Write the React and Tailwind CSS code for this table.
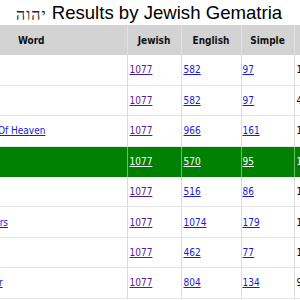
const ROWS = [
  { word: 'Amen', jewish: 1077, english: 582, simple: 97, next: '1' },
  { word: 'Jesus', jewish: 1077, english: 582, simple: 97, next: '4' },
  { word: 'The Window Of Heaven', jewish: 1077, english: 966, simple: 161, next: '1', link: true },
  { word: 'Holy One', jewish: 1077, english: 570, simple: 95, next: '1', active: true },
  { word: 'Mighty', jewish: 1077, english: 516, simple: 86, next: '1' },
  { word: 'Three Teachers', jewish: 1077, english: 1074, simple: 179, next: '1', link: true },
  { word: 'Salvation', jewish: 1077, english: 462, simple: 77, next: '1' },
  { word: 'Great Teacher', jewish: 1077, english: 804, simple: 134, next: '9', link: true },
]

const body = { fontFamily: '"DejaVu Sans Condensed", "DejaVu Sans", Verdana, sans-serif' }

export default function App() {
  return (
    <div className="w-[300px] h-[300px] overflow-hidden bg-white">
      <div className="h-[25px] flex items-start pl-[16px]">
        <span className="mt-[7px] text-[16px] tracking-[1px] leading-none text-[#222]" style={{ fontFamily: '"Liberation Serif", "DejaVu Serif", serif' }}>יהוה</span>
        <span className="ml-[5px] mt-[2px] text-[18.6px] leading-[22px] text-black" style={{ fontFamily: '"Liberation Sans", Arial, sans-serif' }}>
          Results by Jewish Gematria
        </span>
      </div>

      <table className="ml-[-64px] w-[418px] table-fixed border-collapse text-[10px]" style={body}>
        <colgroup>
          <col className="w-[191px]" />
          <col className="w-[54px]" />
          <col className="w-[60px]" />
          <col className="w-[53px]" />
          <col className="w-[60px]" />
        </colgroup>
        <thead>
          <tr className="h-[30px] bg-[#d3d3d3] text-[#111]">
            <th className="font-bold text-center border-r border-[#e0e0e0]">Word</th>
            <th className="font-bold text-center border-r border-[#e0e0e0]">Jewish</th>
            <th className="font-bold text-center border-r border-[#e0e0e0]">English</th>
            <th className="font-bold text-center border-r border-[#e0e0e0]">Simple</th>
            <th className="font-bold text-center">Search</th>
          </tr>
        </thead>
        <tbody>
          {ROWS.map((r, i) => (
            <tr key={i} className={`h-[30.4px] border-b ${r.active ? 'bg-[#008000] text-white border-[#008000]' : 'bg-white text-black border-[#e5e5e5]'}`}>
              <td className={`pl-[4px] whitespace-nowrap border-r ${r.active ? 'border-[#6fb86f]' : 'border-[#dcdcdc]'}`}>
                {r.link ? <a href="#" className={r.active ? 'text-white underline' : 'text-[#1a1adb] underline'}>{r.word}</a> : <span className={r.active ? 'text-white' : 'text-black'}>{r.word}</span>}
              </td>
              <td className={`pl-[2px] border-r ${r.active ? 'border-[#6fb86f]' : 'border-[#dcdcdc]'}`}>
                <a href="#" className={`underline ${r.active ? 'text-white' : 'text-[#551a8b]'}`}>{r.jewish}</a>
              </td>
              <td className={`pl-[2px] border-r ${r.active ? 'border-[#6fb86f]' : 'border-[#dcdcdc]'}`}>
                <a href="#" className={`underline ${r.active ? 'text-white' : 'text-[#1a1adb]'}`}>{r.english}</a>
              </td>
              <td className={`pl-[1px] border-r ${r.active ? 'border-[#6fb86f]' : 'border-[#dcdcdc]'}`}>
                <a href="#" className={`underline ${r.active ? 'text-white' : 'text-[#1a1adb]'}`}>{r.simple}</a>
              </td>
              <td className="pl-[2px]">{r.next}0</td>
            </tr>
          ))}
        </tbody>
      </table>
    </div>
  )
}
